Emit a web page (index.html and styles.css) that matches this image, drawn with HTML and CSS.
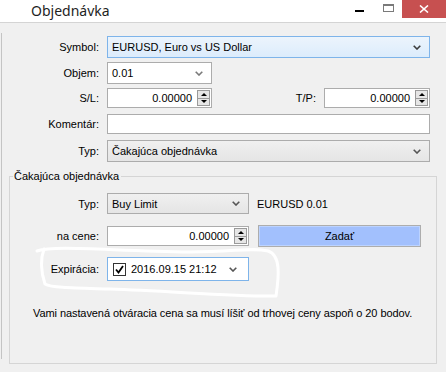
FILE: index.html
```html
<!DOCTYPE html>
<html>
<head>
<meta charset="utf-8">
<link rel="stylesheet" href="styles.css">
</head>
<body>
<div class="window">
  <div class="titlebar">
    <span class="title">Objednávka</span>
    <div class="controls">
      <span class="ctl ctl-min"><svg width="9" height="2" viewBox="0 0 9 2"><rect width="9" height="2" fill="#000"/></svg></span>
      <span class="ctl ctl-max"><svg width="11" height="8" viewBox="0 0 11 8"><rect x="0.5" y="0.5" width="10" height="7" fill="none" stroke="#7a7a7a"/><rect x="0" y="0" width="11" height="2" fill="#7a7a7a"/></svg></span>
      <span class="ctl ctl-close"><svg width="10" height="8" viewBox="0 0 10 8"><path d="M1 0.5 L9 7.5 M9 0.5 L1 7.5" stroke="#fff" stroke-width="1.6"/></svg></span>
    </div>
  </div>
  <div class="client">
    <div class="edge"></div>
    <div class="form">
      <div class="row row-symbol">
        <span class="lbl">Symbol:</span>
        <div class="field combo combo-blue w-wide">EURUSD, Euro vs US Dollar<svg class="chev" width="8" height="5" viewBox="0 0 8 5"><path d="M0.7 0.7 L4 4 L7.3 0.7" fill="none" stroke="#3c3c3c" stroke-width="1.6"/></svg></div>
      </div>
      <div class="row row-objem">
        <span class="lbl">Objem:</span>
        <div class="field combo combo-white w-narrow">0.01<svg class="chev" width="8" height="5" viewBox="0 0 8 5"><path d="M0.7 0.7 L4 4 L7.3 0.7" fill="none" stroke="#7a7a7a" stroke-width="1.6"/></svg></div>
      </div>
      <div class="row row-sl">
        <span class="lbl">S/L:</span>
        <div class="pair">
          <div class="field spin w-narrow"><span class="num">0.00000</span><span class="spinner"><span class="sp-up"></span><span class="sp-down"></span></span></div>
          <span class="lbl-tp">T/P:</span>
          <div class="field spin w-tp"><span class="num">0.00000</span><span class="spinner"><span class="sp-up"></span><span class="sp-down"></span></span></div>
        </div>
      </div>
      <div class="row row-koment">
        <span class="lbl">Komentár:</span>
        <div class="field text w-wide"></div>
      </div>
      <div class="row row-typ">
        <span class="lbl">Typ:</span>
        <div class="field combo combo-gray w-wide">Čakajúca objednávka<svg class="chev" width="8" height="5" viewBox="0 0 8 5"><path d="M0.7 0.7 L4 4 L7.3 0.7" fill="none" stroke="#555" stroke-width="1.6"/></svg></div>
      </div>

      <div class="group">
        <div class="legend">Čakajúca objednávka</div>
        <div class="grow grow-typ">
          <span class="lbl">Typ:</span>
          <div class="field combo combo-gray w-mid">Buy Limit<svg class="chev" width="8" height="5" viewBox="0 0 8 5"><path d="M0.7 0.7 L4 4 L7.3 0.7" fill="none" stroke="#555" stroke-width="1.6"/></svg></div>
          <span class="info">EURUSD 0.01</span>
        </div>
        <div class="grow grow-price">
          <span class="lbl">na cene:</span>
          <div class="field spin w-mid"><span class="num">0.00000</span><span class="spinner"><span class="sp-up"></span><span class="sp-down"></span></span></div>
          <button class="btn">Zadať</button>
        </div>
        <div class="grow grow-exp">
          <span class="lbl">Expirácia:</span>
          <div class="field dt w-mid">
            <span class="check"><svg width="11" height="11" viewBox="0 0 11 11"><path d="M2 5.5 L4.5 8.5 L9 2" fill="none" stroke="#000" stroke-width="1.8"/></svg></span>
            <span class="dt-text">2016.09.15 21:12</span>
            <svg class="chev" width="8" height="5" viewBox="0 0 8 5"><path d="M0.7 0.7 L4 4 L7.3 0.7" fill="none" stroke="#555" stroke-width="1.6"/></svg>
          </div>
        </div>
        <p class="msg">Vami nastavená otváracia cena sa musí líšiť od trhovej ceny aspoň o 20 bodov.</p>
      </div>
    </div>
  </div>
  <svg class="scribble" width="446" height="372" viewBox="0 0 446 372">
    <path d="M37 251 C 55 245, 110 251, 190 252 C 235 252, 252 247, 268 251 C 281 255, 279 276, 276 296 C 240 297, 170 291, 110 289 C 75 288, 52 288, 45 284 C 41 272, 40 260, 44 249" fill="none" stroke="#ffffff" stroke-width="3" stroke-linecap="round" stroke-linejoin="round"/>
  </svg>
</div>
</body>
</html>
```

FILE: styles.css
```css
* { box-sizing: border-box; }
html, body { margin: 0; padding: 0; }
body {
  width: 446px;
  height: 372px;
  overflow: hidden;
  background: #f0f0f0;
  font-family: "Liberation Sans", Arial, sans-serif;
  font-size: 11px;
  color: #000;
}
.window {
  position: relative;
  width: 446px;
  height: 372px;
  background: #f0f0f0;
}
.titlebar {
  height: 23px;
  background: #ffffff;
  border-bottom: 1px solid #d4d4d4;
  display: flex;
  align-items: flex-start;
}
.title {
  margin-left: 31px;
  margin-top: 1px;
  font-family: "Noto Sans", sans-serif;
  font-size: 14px;
  line-height: 20px;
  color: #1e1e1e;
}
.controls {
  margin-left: auto;
  display: flex;
  align-items: flex-start;
}
.ctl {
  display: flex;
  align-items: center;
  justify-content: center;
}
.ctl-min { width: 9px; height: 2px; margin-top: 10px; margin-right: 19px; }
.ctl-min svg, .ctl-max svg { display: block; }
.ctl-max { width: 11px; height: 8px; margin-top: 4px; margin-right: 8px; }
.ctl-close {
  width: 44px;
  height: 18px;
  background: #c75050;
}
.client {
  display: flex;
  align-items: flex-start;
}
.edge {
  width: 1px;
  margin-left: 1px;
  margin-top: 10px;
  height: 326px;
  background: #c4c4c4;
}
.form {
  display: flex;
  flex-direction: column;
  width: 444px;
}
.row {
  display: grid;
  grid-template-columns: 97px max-content;
  justify-content: start;
  column-gap: 8px;
  align-items: center;
  justify-items: start;
}
.lbl { justify-self: end; white-space: nowrap; }
.row-symbol { margin-top: 13px; }
.row-objem { margin-top: 4px; }
.row-sl { margin-top: 4px; }
.row-koment { margin-top: 6px; }
.row-typ { margin-top: 6px; }

.field {
  position: relative;
  display: flex;
  align-items: center;
  border: 1px solid #acacac;
  background: #fff;
  white-space: nowrap;
}
.w-wide { width: 323px; }
.w-narrow { width: 105px; }
.w-tp { width: 106px; }
.w-mid { width: 142px; }

.combo { height: 22px; padding-left: 4px; }
.combo .chev { margin-left: auto; margin-right: 8px; display: block; }
.combo-blue {
  background: linear-gradient(#ecf4fc, #dcecfc);
  border-color: #7eb4ea;
}
.combo-white { background: #fff; border-color: #acacac; }
.combo-gray {
  background: linear-gradient(#f0f0f0, #e5e5e5);
  border-color: #acacac;
}
.text { height: 20px; }
.spin { height: 20px; justify-content: flex-end; }
.num { margin-right: 5px; }
.spinner {
  width: 13px;
  height: 16px;
  margin-right: 1px;
  border: 1px solid #9a9a9a;
  background: #e6e6e6;
  display: flex;
  flex-direction: column;
}
.sp-up, .sp-down {
  flex: 1;
  display: flex;
  align-items: center;
  justify-content: center;
}
.sp-up { border-bottom: 1px solid #9a9a9a; }
.sp-up::before {
  content: "";
  border-left: 3px solid transparent;
  border-right: 3px solid transparent;
  border-bottom: 3px solid #000;
}
.sp-down::before {
  content: "";
  border-left: 3px solid transparent;
  border-right: 3px solid transparent;
  border-top: 3px solid #000;
}
.pair {
  display: flex;
  align-items: center;
  width: 323px;
}
.lbl-tp { margin-left: auto; margin-right: 8px; }

.group {
  margin-top: 14px;
  margin-left: 7px;
  width: 428px;
  height: 188px;
  border: 1px solid #d5d5d5;
  display: flex;
  flex-direction: column;
}
.legend {
  margin-top: -7px;
  margin-left: 3px;
  padding: 0 2px 0 1px;
  line-height: 13px;
  background: #f0f0f0;
  align-self: flex-start;
}
.grow {
  display: grid;
  grid-template-columns: 89px 142px max-content;
  justify-content: start;
  column-gap: 8px;
  align-items: center;
  justify-items: start;
}
.grow-typ { margin-top: 10px; column-gap: 8px; }
.grow-typ .combo { height: 21px; }
.info { margin-left: 0; }
.grow-price { margin-top: 11px; column-gap: 8px; }
.grow-price .btn { margin-left: 1px; }
.btn {
  width: 163px;
  height: 22px;
  border: 1px solid #adadad;
  box-shadow: inset 0 0 0 1px #bcd3ff;
  background: #a2c0fd;
  font-family: "Liberation Sans", Arial, sans-serif;
  font-size: 11px;
  color: #000;
  padding: 0;
}
.grow-exp { margin-top: 10px; }
.dt {
  height: 24px;
  border-color: #7eb4ea;
  padding-left: 5px;
}
.check {
  width: 13px;
  height: 13px;
  border: 1px solid #333;
  background: #fff;
  display: flex;
  align-items: center;
  justify-content: center;
}
.check svg { display: block; }
.dt-text { margin-left: 5px; width: 86px; overflow: hidden; }
.dt .chev { margin-left: auto; margin-right: 11px; display: block; }
.msg {
  margin: 26px 0 0 23px;
  line-height: 13px;
  letter-spacing: -0.08px;
}
.scribble {
  position: absolute;
  left: 0;
  top: 0;
  pointer-events: none;
}
```
